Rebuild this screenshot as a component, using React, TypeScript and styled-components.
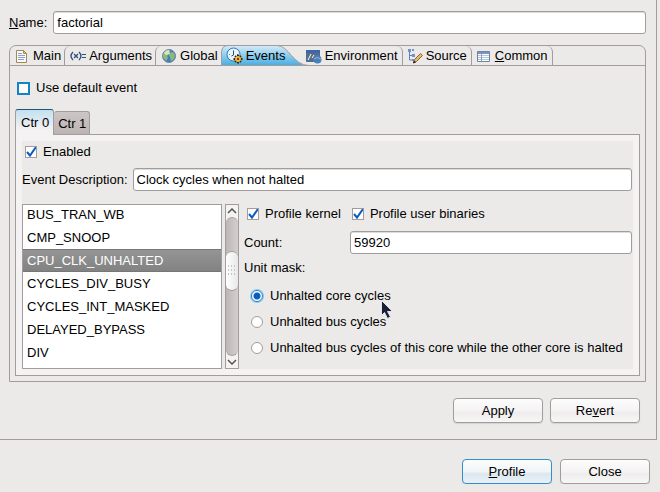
import React, { useState } from "react";
import styled, { createGlobalStyle, css } from "styled-components";

const line = "#a39c9c";
const face = "#ebeae8";

const GlobalStyle = createGlobalStyle`
  *, *::before, *::after { box-sizing: border-box; }
  body {
    margin: 0;
    background: ${face};
    color: #000;
    font: 13px/16px "Liberation Sans", Arial, sans-serif;
  }
  button, input { font: inherit; color: inherit; }
`;

const Dialog = styled.main`
  display: flex;
  flex-direction: column;
`;

const Pane = styled.section`
  margin-right: 3px;
  padding: 11px 10px 16px 9px;
  border: solid ${line};
  border-width: 0 1px 1px 0;
`;

const NameRow = styled.label`
  display: flex;
  align-items: center;
  gap: 6px;
  margin-bottom: 11px;
`;

const TextBox = styled.input`
  flex: 1;
  min-width: 0;
  height: 23px;
  padding: 0 3px;
  border: 1px solid ${line};
  border-radius: 3px;
  background: #fff;
  box-shadow: inset 0 1px 0 #dedbdb;
  outline: none;
`;

const Folder = styled.div`
  border: 1px solid ${line};
  border-radius: 7px 7px 0 0;
`;

const TabBar = styled.div`
  display: flex;
  height: 20px;
  border-bottom: 1px solid ${line};
`;

const edges = {
  none: css`
    padding: 0 3px 0 4px;
  `,
  left: css`
    padding: 0 3px 0 5px;
    border-left: 1px solid ${line};
    border-top-left-radius: 6px;
  `,
  right: css`
    padding: 0 4px;
    border-right: 1px solid ${line};
    border-top-right-radius: 6px;
  `,
};

const Tab = styled.button<{ $edge: keyof typeof edges }>`
  display: flex;
  align-items: center;
  gap: 3px;
  height: 19px;
  border: 0;
  background: none;
  white-space: nowrap;
  ${(p) => edges[p.$edge]}
`;

const ActiveTab = styled(Tab)`
  position: relative;
  width: 81px;
  padding-left: 5px;
`;

const TabShape = styled.svg`
  position: absolute;
  left: 0;
  top: -1px;
  z-index: -1;
`;

const TabIcon = styled.svg`
  flex: none;
  width: 16px;
  height: 16px;
`;

const ClockDrawing = styled(TabIcon)`
  width: 17px;
  height: 17px;
`;

const FolderBody = styled.div`
  padding: 14px 5px 5px;
`;

const Choice = styled.label`
  display: flex;
  align-items: center;
  gap: 6px;
`;

const RadioChoice = styled(Choice)`
  gap: 7px;
`;

const DefaultChoice = styled(Choice)`
  margin: 0 2px 13px;
`;

const TickBox = styled.input<{ $focus?: boolean }>`
  appearance: none;
  flex: none;
  width: ${(p) => (p.$focus ? 13 : 12)}px;
  height: ${(p) => (p.$focus ? 13 : 12)}px;
  margin: 0;
  border: ${(p) => (p.$focus ? "2px solid #1583c4" : `1px solid ${line}`)};
  background: #fff;
  &:checked {
    background: #fff
      url("data:image/svg+xml,%3Csvg xmlns='http://www.w3.org/2000/svg' viewBox='0 0 12 12'%3E%3Cpath d='M2 6L5 9.500L11 1' fill='none' stroke='%230b5cc0' stroke-width='2'/%3E%3C/svg%3E")
      center / 12px 12px no-repeat;
  }
`;

const Radio = styled.input`
  appearance: none;
  flex: none;
  width: 12px;
  height: 12px;
  margin: 0;
  border: 1px solid ${line};
  border-radius: 50%;
  background: #fff;
  &:checked {
    border-color: #1b86cb;
    background: radial-gradient(circle, #0b5cc0 0 3px, #fff 4px);
    box-shadow: 0 0 0 1px #8cc4e6;
  }
`;

const CounterTabs = styled.div`
  display: flex;
  align-items: flex-end;
`;

const CounterTab = styled.button<{ $active?: boolean }>`
  border: 1px solid ${line};
  border-radius: 3px 3px 0 0;
  ${(p) =>
    p.$active
      ? css`
          position: relative;
          height: 26px;
          margin-bottom: -1px;
          padding: 0 4px 0 5px;
          border-color: #15597a #a39c9c transparent;
          border-bottom: 0;
          background: linear-gradient(#c3e0ef, #f4f2f3 80%);
        `
      : css`
          height: 23px;
          padding: 1px 3px 0 4px;
          border-left: 0;
          border-bottom: 0;
          background: linear-gradient(#cdc6c6, #bcb3b3);
        `}
`;

const CounterPage = styled.div`
  padding: 6px;
  border: 1px solid ${line};
  background: #f4f2f3;
`;

const Form = styled.div`
  padding: 3px 1px 0 0;
  background: ${face};
`;

const EnabledChoice = styled(Choice)`
  margin: 0 3px 8px;
`;

const FieldRow = styled.label`
  display: flex;
  align-items: center;
  gap: 5px;
`;

const Columns = styled.div`
  display: flex;
  margin-top: 13px;
`;

const ListBox = styled.ul`
  flex: none;
  width: 200px;
  height: 165px;
  margin: 0 3px 0 0;
  padding: 0;
  overflow: hidden;
  border: 1px solid ${line};
  background: #fff;
  list-style: none;
  &::before {
    content: "";
    display: block;
    margin-top: -2px;
  }
`;

const ListItem = styled.li`
  height: 23px;
  padding: 0 4px;
  line-height: 23px;
  &[aria-selected="true"] {
    border: solid #777;
    border-width: 1px 0;
    line-height: 21px;
    color: #fff;
    background: linear-gradient(#959595, #828282);
  }
`;

const ScrollBar = styled.div`
  display: flex;
  flex-direction: column;
  flex: none;
  width: 14px;
  border: 1px solid ${line};
  background: #f4f2f3;
`;

const ScrollButton = styled.button`
  display: grid;
  place-items: center;
  height: 12px;
  padding: 0;
  border: 0;
  background: none;
`;

const Trough = styled.div`
  flex: 1;
  padding-top: 33px;
  border: solid ${line};
  border-width: 1px 0;
  border-radius: 6px;
  background: linear-gradient(90deg, #bdb6b6, #d4cece);
`;

const Thumb = styled.div`
  display: grid;
  place-items: center;
  height: 40px;
  border: solid ${line};
  border-width: 1px 0;
  border-radius: 6px;
  background: linear-gradient(90deg, #fff, #e9e7e7);
`;

const Options = styled.div`
  flex: 1;
  min-width: 0;
  padding: 2px 0 0 5px;
`;

const TickRow = styled.div`
  display: flex;
  gap: 11px;
  margin: 0 3px 9px;
`;

const CountLabel = styled.span`
  width: 101px;
`;

const Masks = styled.fieldset`
  display: flex;
  flex-direction: column;
  gap: 10px;
  margin: 6px 0 0;
  padding: 0 0 0 7px;
  border: 0;
`;

const MaskTitle = styled.legend`
  margin: 0 0 12px -7px;
  padding: 0;
`;

const Buttons = styled.div`
  display: flex;
  justify-content: flex-end;
  gap: 7px;
  padding: 16px 6px 0;
`;

const FooterButtons = styled(Buttons)`
  gap: 8px;
  padding: 19px 10px 0;
`;

const PushButton = styled.button<{ $default?: boolean }>`
  width: 90px;
  height: 25px;
  padding: 0;
  border: 1px solid ${(p) => (p.$default ? "#3390c6" : line)};
  border-radius: 4px;
  box-shadow: 0 1px 1px #d5d2d2;
  background: ${(p) =>
    p.$default
      ? "linear-gradient(#fbfcfd, #f1f5f8 50%, #dce7ef 60%, #e8f1f7)"
      : "linear-gradient(#fdfdfd, #f5f3f4 50%, #eeecec 60%, #f8f7f7)"};
`;

const Pointer = styled.svg`
  position: absolute;
  left: 380px;
  top: 299px;
  pointer-events: none;
`;

const MainIcon = () => (
  <TabIcon viewBox="0 0 16 16">
    <path d="M2.500 2.500h7l3 3v9h-10z" fill="#f5f8ff" stroke="#a58a4a" />
    <path d="M9.500 2.500v3h3z" fill="#e8c878" stroke="#b08a3a" />
    <path d="M4 5.500h4M4 7.500h7M4 9.500h7M4 11.500h6" stroke="#8aa2ce" />
  </TabIcon>
);

const GlobeIcon = () => (
  <TabIcon viewBox="1 1 16 16">
    <circle cx="9" cy="9" r="6.500" fill="#4480bb" stroke="#7287aa" />
    <path d="M3 7L6 3L10 3L9 7L7 9L8 11L6 14L3 10zM11 5l3 1 1 3-2 4-2 1-1-4-1-2z" fill="#8db979" />
    <path d="M4 6q2-3 5-3l1 4-4 1z" fill="#eef0cf" opacity=".8" />
  </TabIcon>
);

const ClockIcon = () => (
  <ClockDrawing viewBox="0 0 17 17">
    <circle cx="7.500" cy="7.500" r="6.500" fill="#e9f5fc" stroke="#3c78b4" />
    <path d="M7.500 3.500v4.500l-2 1" fill="none" stroke="#204f86" />
    <path d="M3 7.500h1M11 7.500h1" stroke="#5b8bbb" />
    <path d="M12 7.500v9M7.500 12h9M9 9l6 6M15 9l-6 6" stroke="#33240f" strokeWidth="2" />
    <circle cx="12" cy="12" r="3" fill="#f2b53c" />
    <circle cx="12" cy="12" r="1" fill="#33240f" />
  </ClockDrawing>
);

const EnvironmentIcon = () => (
  <TabIcon viewBox="0 0 16 16">
    <path d="M.5 2.500h13v11H.5z" fill="#5c6d82" stroke="#476caa" />
    <path d="M0 2h14v3H0z" fill="#3b67ad" />
    <path d="M2 12l3-6M6 10l2-3" stroke="#fff" />
    <circle cx="11.500" cy="11.500" r="4" fill="#477fbd" />
    <path d="M8 11q3-3 7 0" fill="none" stroke="#8fb6dc" />
  </TabIcon>
);

const SourceIcon = () => (
  <TabIcon viewBox="0 0 16 16">
    <path d="M2.500 3v9h3M2.500 7.500h3" fill="none" stroke="#5b7fba" />
    <path d="M1 1h3v3H1zM5 1h2v2H5zM5 6h3v3H5zM5 11h2v2H5z" fill="#6f93cc" />
    <path d="M6.500 14.500l1-3 6-6 2 2-6 6z" fill="#e5b96b" stroke="#896531" />
    <path d="M6 15.500l1-3 2 2z" fill="#222" />
  </TabIcon>
);

const TableIcon = () => (
  <TabIcon viewBox="0 0 16 16">
    <path d="M1.500 3.500h12v10h-12z" fill="#fff" stroke="#6d82a5" />
    <path d="M2 4h11v2H2z" fill="#7c95bb" />
    <path d="M2 7.500h11M2 9.500h11M2 11.500h11" stroke="#b5c5dc" />
    <path d="M5.500 6v7" stroke="#8ba1c3" />
  </TabIcon>
);

const VariableIcon = () => (
  <TabIcon viewBox="0 0 16 16" fill="none" stroke="#35507f">
    <path d="M3 4q-4 4 0 8M9 4q4 4 0 8M4 6l4 4M8 6l-4 4" strokeWidth="1.400" />
    <path d="M12 6.500h4M12 9.500h4" />
  </TabIcon>
);

const Chevron = ({ down }: { down?: boolean }) => (
  <svg width="10" height="6" viewBox="0 0 10 6" fill="none" stroke="#555" strokeWidth="1.500">
    <path d={down ? "M1 1l4 4 4-4" : "M1 5l4-4 4 4"} />
  </svg>
);

const events = [
  "BUS_TRAN_WB",
  "CMP_SNOOP",
  "CPU_CLK_UNHALTED",
  "CYCLES_DIV_BUSY",
  "CYCLES_INT_MASKED",
  "DELAYED_BYPASS",
  "DIV",
];

const masks = [
  "Unhalted core cycles",
  "Unhalted bus cycles",
  "Unhalted bus cycles of this core while the other core is halted",
];

export default function App() {
  const [selected, setSelected] = useState("CPU_CLK_UNHALTED");
  return (
    <Dialog>
      <GlobalStyle />
      <Pane>
        <NameRow>
          <span><u>N</u>ame:</span>
          <TextBox defaultValue="factorial" />
        </NameRow>
        <Folder>
          <TabBar role="tablist">
            <Tab role="tab" $edge="none"><MainIcon />Main</Tab>
            <Tab role="tab" $edge="left"><VariableIcon />Arguments</Tab>
            <Tab role="tab" $edge="left"><GlobeIcon />Global</Tab>
            <ActiveTab role="tab" aria-selected="true" $edge="none">
              <TabShape width="90" height="21" viewBox="0 0 90 21">
                <defs>
                  <linearGradient id="tab" x1="0" y1="0" x2="0" y2="1">
                    <stop offset="0" stopColor="#d4ecf8" />
                    <stop offset="1" stopColor="#46ace2" />
                  </linearGradient>
                </defs>
                <path d="M.5 20.500V7Q1 .5 7 .5H56C68 .5 72 20.500 88 20.500" fill="url(#tab)" stroke={line} />
              </TabShape>
              <ClockIcon />Events
            </ActiveTab>
            <Tab role="tab" $edge="right"><EnvironmentIcon />Environment</Tab>
            <Tab role="tab" $edge="right"><SourceIcon />Source</Tab>
            <Tab role="tab" $edge="right"><TableIcon /><span><u>C</u>ommon</span></Tab>
          </TabBar>
          <FolderBody>
            <DefaultChoice><TickBox type="checkbox" $focus />Use default event</DefaultChoice>
            <CounterTabs role="tablist">
              <CounterTab role="tab" aria-selected="true" $active>Ctr 0</CounterTab>
              <CounterTab role="tab">Ctr 1</CounterTab>
            </CounterTabs>
            <CounterPage>
              <Form>
                <EnabledChoice><TickBox type="checkbox" defaultChecked />Enabled</EnabledChoice>
                <FieldRow>
                  Event Description:
                  <TextBox defaultValue="Clock cycles when not halted" />
                </FieldRow>
                <Columns>
                  <ListBox role="listbox" aria-label="Events">
                    {events.map((name) => (
                      <ListItem key={name} role="option" aria-selected={name === selected} onClick={() => setSelected(name)}>
                        {name}
                      </ListItem>
                    ))}
                  </ListBox>
                  <ScrollBar>
                    <ScrollButton aria-label="Scroll up"><Chevron /></ScrollButton>
                    <Trough>
                      <Thumb>
                        <svg width="8" height="12" viewBox="0 0 8 12" fill="#c9c4c4">
                          {[0, 4, 8].map((y) => [0, 3, 6].map((x) => (
                            <rect key={`${x}-${y}`} x={x} y={y} width="1" height="2" />
                          )))}
                        </svg>
                      </Thumb>
                    </Trough>
                    <ScrollButton aria-label="Scroll down"><Chevron down /></ScrollButton>
                  </ScrollBar>
                  <Options>
                    <TickRow>
                      <Choice><TickBox type="checkbox" defaultChecked />Profile kernel</Choice>
                      <Choice><TickBox type="checkbox" defaultChecked />Profile user binaries</Choice>
                    </TickRow>
                    <FieldRow>
                      <CountLabel>Count:</CountLabel>
                      <TextBox defaultValue="59920" />
                    </FieldRow>
                    <Masks>
                      <MaskTitle>Unit mask:</MaskTitle>
                      {masks.map((mask, i) => (
                        <RadioChoice key={mask}><Radio type="radio" name="mask" defaultChecked={i === 0} />{mask}</RadioChoice>
                      ))}
                    </Masks>
                  </Options>
                </Columns>
              </Form>
            </CounterPage>
          </FolderBody>
        </Folder>
        <Buttons>
          <PushButton>Apply</PushButton>
          <PushButton>Re<u>v</u>ert</PushButton>
        </Buttons>
      </Pane>
      <FooterButtons>
        <PushButton $default><u>P</u>rofile</PushButton>
        <PushButton>Close</PushButton>
      </FooterButtons>
      <Pointer width="16" height="22" viewBox="0 0 16 22">
        <path d="M1.500 1.500v15l3-3 3 6 3-1.500-3-5.500h5z" fill="#1b1e38" stroke="#e4e4ec" />
      </Pointer>
    </Dialog>
  );
}
